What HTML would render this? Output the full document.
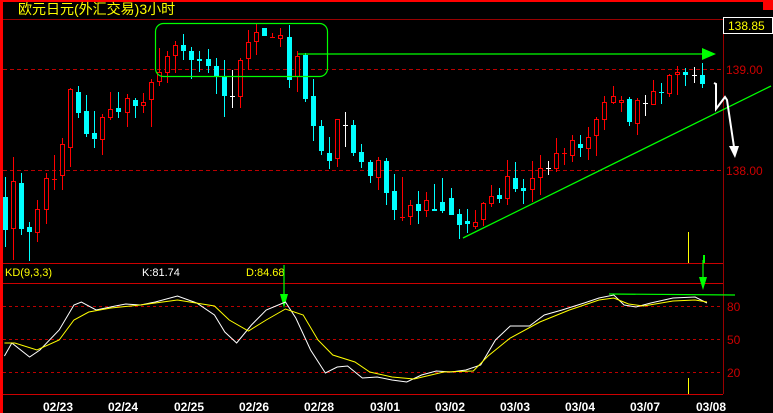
<!DOCTYPE html>
<html><head><meta charset="utf-8"><style>
html,body{margin:0;padding:0;background:#000;width:773px;height:413px;overflow:hidden}
svg{display:block}
text{font-family:"Liberation Sans","Noto Sans CJK SC",sans-serif}
</style></head><body>
<svg id="s" width="773" height="413" xmlns="http://www.w3.org/2000/svg" shape-rendering="crispEdges">
<rect width="773" height="413" fill="#000"/>
<rect x="0" y="0" width="773" height="2" fill="#f00"/>
<rect x="0" y="0" width="3" height="413" fill="#f00"/>
<rect x="763" y="2" width="10" height="8" fill="#f00"/>
<text x="18" y="14" fill="#ff0" font-size="14">欧元日元(外汇交易)3小时</text>
<line x1="3" y1="19.5" x2="723" y2="19.5" stroke="#900"/>
<line x1="723.5" y1="19" x2="723.5" y2="394" stroke="#900"/>
<line x1="3" y1="69.5" x2="723" y2="69.5" stroke="#b00" stroke-dasharray="4,3"/>
<line x1="3" y1="170.5" x2="723" y2="170.5" stroke="#b00" stroke-dasharray="4,3"/>
<rect x="723.5" y="17.5" width="49" height="16" fill="#000" stroke="#fff"/>
<text x="728" y="30" fill="#ff0" font-size="12">138.85</text>
<text x="726" y="74" fill="#c00" font-size="12">139.00</text>
<text x="726" y="175" fill="#c00" font-size="12">138.00</text>
<line x1="3" y1="263.5" x2="723" y2="263.5" stroke="#c00"/>
<line x1="3" y1="283.5" x2="723" y2="283.5" stroke="#c00"/>
<line x1="3" y1="394.5" x2="723" y2="394.5" stroke="#c00"/>
<text x="5" y="276" fill="#ff0" font-size="11">KD(9,3,3)</text>
<text x="142" y="276" fill="#fff" font-size="11">K:81.74</text>
<text x="246" y="276" fill="#ff0" font-size="11">D:84.68</text>
<g stroke="#b00" stroke-dasharray="3,3"><line x1="3" y1="306.5" x2="723" y2="306.5"/><line x1="3" y1="339.5" x2="723" y2="339.5"/><line x1="3" y1="372.5" x2="723" y2="372.5"/></g>
<g fill="#c00" font-size="12"><text x="727" y="311">80</text><text x="727" y="344">50</text><text x="727" y="377">20</text></g>
<g fill="#fff" font-size="12" font-weight="bold" text-anchor="middle">
<text x="58" y="411">02/23</text><text x="123" y="411">02/24</text><text x="189" y="411">02/25</text><text x="254" y="411">02/26</text><text x="319" y="411">02/28</text><text x="385" y="411">03/01</text><text x="450" y="411">03/02</text><text x="515" y="411">03/03</text><text x="580" y="411">03/04</text><text x="645" y="411">03/07</text><text x="711" y="411">03/08</text></g>
<g id="c"></g>
<g shape-rendering="auto">
<rect x="155.5" y="23.5" width="172" height="53" rx="8" fill="none" stroke="#0f0" stroke-width="1.2"/>
<line x1="298" y1="54" x2="704" y2="54" stroke="#0f0" stroke-width="1.3"/>
<polygon points="702,48 716,54 702,60" fill="#0f0"/>
<line x1="463" y1="238" x2="771" y2="86" stroke="#0f0" stroke-width="1.3"/>
<polyline points="714,83 716,84 716,109 725,97 727,100 734,147" fill="none" stroke="#fff" stroke-width="2"/>
<polygon points="729,146 739,146 735,158" fill="#fff"/>
<line x1="688.5" y1="232" x2="688.5" y2="263" stroke="#ff0"/>
<line x1="704" y1="255" x2="704" y2="263" stroke="#0f0" stroke-width="2"/>
<line x1="688.5" y1="378" x2="688.5" y2="394" stroke="#ff0"/>
<line x1="284" y1="265" x2="284" y2="300" stroke="#0f0" stroke-width="1.2"/>
<polygon points="280,294 288,294 284,308" fill="#0f0"/>
<line x1="703" y1="260" x2="703" y2="282" stroke="#0f0" stroke-width="1.2"/>
<polygon points="699,277 707,277 703,290" fill="#0f0"/>
<line x1="609" y1="294" x2="735" y2="295" stroke="#0f0" stroke-width="1.2"/>
<g transform="scale(1.479,1)">
<polyline fill="none" stroke="#fff" stroke-width="1" vector-effect="non-scaling-stroke" points="3,356 8,343 20,357 27,350 40,330 50,305 55,302 65,310 78,306 85,304 95,305 105,302 120,296 133,303 145,315 152,332 160,343 170,325 180,310 193,302 200,318 210,350 220,373 228,367 235,366 245,378 255,377 265,380 275,382 285,375 295,371 305,372 315,370 325,365 335,340 345,326 358,326 368,315 380,310 395,303 405,298 415,295 422,305 430,307 440,303 455,298 470,297 478,303"/>
<polyline fill="none" stroke="#ff0" stroke-width="1" vector-effect="non-scaling-stroke" points="3,343 10,343 25,350 40,340 50,320 60,312 75,308 95,305 120,300 145,306 155,320 168,331 180,320 193,309 205,315 215,340 225,355 240,362 250,372 265,377 280,379 300,372 320,371 330,356 345,338 365,322 385,310 405,300 415,298 425,304 435,306 455,301 470,300 478,302"/>
</g>
</g>
</svg>
<script>
var d=[
[197,230,177,247,'c'],[181,229,157,260,'r'],[183,229,173,235,'c'],[227,232,222,261,'c'],[209,233,200,242,'r'],[178,210,173,224,'r'],[179,179,155,190,'r'],[144,176,138,190,'r'],[89,148,88,167,'r'],[92,113,86,118,'c'],
[111,134,95,137,'c'],[133,139,111,148,'c'],[117,140,114,155,'r'],[109,118,92,120,'r'],[108,112,92,118,'c'],[98,113,94,127,'r'],[100,106,98,118,'c'],[102,106,93,113,'r'],[82,100,79,127,'r'],[72,82,48,86,'r'],
[56,73,51,83,'r'],[45,56,41,73,'r'],[45,51,34,60,'c'],[51,60,47,79,'c'],[59,61,51,72,'c'],[59,66,49,73,'c'],[66,76,58,94,'c'],[77,96,60,117,'c'],[96,96,70,108,'w'],[60,97,58,108,'r'],
[42,59,30,70,'r'],[32,42,24,55,'r'],[28,36,28,36,'c'],[37,37,33,38,'r'],[35,39,28,47,'r'],[37,80,25,88,'c'],[56,77,51,92,'r'],[55,99,53,102,'c'],[96,126,79,141,'c'],[126,151,120,155,'c'],
[153,161,137,169,'c'],[119,159,119,167,'r'],[125,125,112,147,'w'],[125,153,120,156,'c'],[152,162,144,168,'c'],[162,176,160,183,'c'],[160,178,157,190,'r'],[161,193,158,205,'c'],[191,210,174,220,'c'],[217,217,177,221,'r'],
[205,217,200,225,'r'],[204,211,191,224,'c'],[200,211,192,217,'r'],[209,211,184,209,'c'],[202,211,178,213,'c'],[198,215,188,215,'c'],[214,225,209,239,'c'],[221,224,209,233,'c'],[222,227,210,229,'r'],[203,220,202,226,'r'],
[196,204,185,207,'r'],[195,199,188,203,'c'],[176,199,160,205,'r'],[178,189,162,192,'c'],[188,191,179,204,'c'],[178,190,161,202,'r'],[168,178,155,195,'r'],[168,168,161,175,'w'],[153,169,138,172,'r'],[153,153,148,165,'r'],
[140,156,135,162,'r'],[144,148,135,157,'c'],[137,149,127,160,'r'],[119,136,117,156,'r'],[102,120,96,130,'r'],[96,103,86,104,'r'],[100,103,96,112,'r'],[99,122,97,126,'c'],[100,124,98,135,'r'],[103,103,95,116,'w'],
[91,105,80,105,'r'],[92,93,83,104,'c'],[75,94,74,97,'r'],[72,75,66,95,'r'],[72,75,68,86,'c'],[75,75,67,83,'w'],[75,84,63,88,'c']];
var h='';
d.forEach(function(a,i){var x=Math.round(5+8.1*i),t=a[0],b=a[1];
var col=a[4]=='r'?'#f00':a[4]=='c'?'#0ff':'#fff';
h+='<line x1="'+(x+.5)+'" y1="'+a[2]+'" x2="'+(x+.5)+'" y2="'+a[3]+'" stroke="'+col+'"/>';
if(b-t<1){h+='<rect x="'+(x-2)+'" y="'+t+'" width="5" height="1" fill="'+col+'"/>';}
else if(a[4]=='r'){h+='<rect x="'+(x-1.5)+'" y="'+(t+.5)+'" width="4" height="'+(b-t-1)+'" fill="#000" stroke="#f00"/>';}
else{h+='<rect x="'+(x-2)+'" y="'+t+'" width="5" height="'+(b-t)+'" fill="'+col+'"/>';}
});
document.getElementById('c').innerHTML=h;
</script>
</body></html>
